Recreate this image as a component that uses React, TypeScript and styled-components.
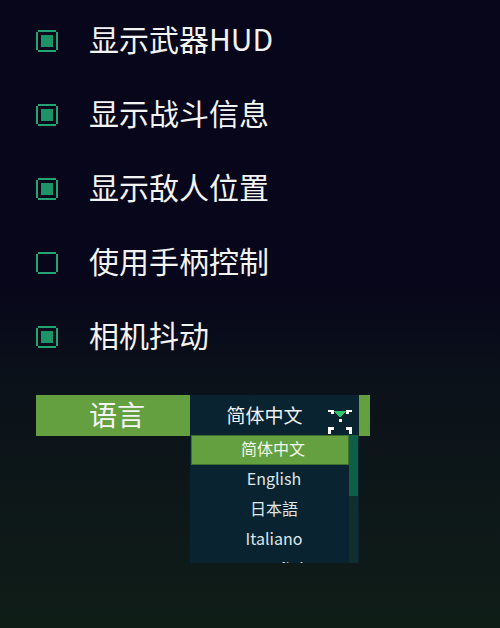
import React from "react";
import styled, { createGlobalStyle } from "styled-components";

const GlobalStyle = createGlobalStyle`
  html, body {
    margin: 0;
    padding: 0;
    width: 500px;
    height: 628px;
    overflow: hidden;
    background: linear-gradient(180deg, #07061a 0%, #07061a 45%, #0b1219 62%, #0f1d17 100%);
    font-family: "Noto Sans CJK SC", "Noto Sans", sans-serif;
  }
  #root { height: 628px; }
`;

const Page = styled.div`
  width: 500px;
  height: 628px;
  box-sizing: border-box;
  padding: 4px 0 0 36px;
  display: flex;
  flex-direction: column;
`;

const OptionRow = styled.div`
  height: 74px;
  display: flex;
  align-items: center;
  gap: 31px;
`;

const OptionLabel = styled.span`
  font-size: 30px;
  color: #f3f3f3;
  line-height: 1;
  padding-bottom: 6px;
`;

const BoxSvg = styled.svg`
  width: 22px;
  height: 22px;
  flex: none;
  shape-rendering: crispEdges;
`;

const Checkbox = ({ checked }: { checked: boolean }) => (
  <BoxSvg viewBox="0 0 22 22">
    <rect x="2" y="0" width="18" height="2" fill="#22a372" />
    <rect x="2" y="20" width="18" height="2" fill="#22a372" />
    <rect x="0" y="2" width="2" height="18" fill="#22a372" />
    <rect x="20" y="2" width="2" height="18" fill="#22a372" />
    {checked && <rect x="5" y="5" width="12" height="12" fill="#1c9467" />}
  </BoxSvg>
);

const LanguageRow = styled.div`
  margin-top: 21px;
  width: 334px;
  height: 41px;
  display: flex;
  background: #64a03f;
  position: relative;
`;

const LangLabel = styled.div`
  width: 154px;
  box-sizing: border-box;
  padding: 0 0 4px 8px;
  display: flex;
  align-items: center;
  justify-content: center;
  font-size: 28px;
  color: #f5f5f5;
`;

const Select = styled.div`
  width: 169px;
  box-sizing: border-box;
  padding: 0 20px 2px 0;
  background: #0a2331;
  display: flex;
  align-items: center;
  justify-content: center;
  font-size: 19px;
  color: #eef2f2;
  position: relative;
  overflow: hidden;
`;

const ArrowSvg = styled.svg`
  position: absolute;
  left: 138px;
  top: 15px;
  width: 24px;
  height: 24px;
  shape-rendering: crispEdges;
`;

const Dropdown = styled.div`
  position: absolute;
  left: 154px;
  top: 40px;
  width: 169px;
  height: 128px;
  background: #0a2331;
  overflow: hidden;
  z-index: 2;
`;

const ItemList = styled.div`
  width: 158px;
  margin-left: 1px;
  display: flex;
  flex-direction: column;
`;

const Item = styled.div<{ $active?: boolean }>`
  height: 30px;
  box-sizing: border-box;
  display: flex;
  align-items: center;
  justify-content: center;
  padding: 0 0 4px ${(p) => (p.$active ? "6px" : "8px")};
  font-size: 16px;
  color: ${(p) => (p.$active ? "#f2f6ee" : "#dfe7ea")};
  background: ${(p) => (p.$active ? "#64a03f" : "transparent")};
  border: 1px solid ${(p) => (p.$active ? "#3f6f30" : "transparent")};
`;

const ScrollTrack = styled.div`
  position: absolute;
  right: 1px;
  top: 0;
  width: 9px;
  height: 100%;
  background: #0f2e2c;
`;

const ScrollThumb = styled.div`
  width: 100%;
  height: 61px;
  background: #0f5f46;
`;

const options = [
  { label: "显示武器HUD", checked: true },
  { label: "显示战斗信息", checked: true },
  { label: "显示敌人位置", checked: true },
  { label: "使用手柄控制", checked: false },
  { label: "相机抖动", checked: true },
];

const languages = ["简体中文", "English", "日本語", "Italiano", "Español"];

export default function App() {
  return (
    <>
      <GlobalStyle />
      <Page>
        {options.map((o) => (
          <OptionRow key={o.label}>
            <Checkbox checked={o.checked} />
            <OptionLabel>{o.label}</OptionLabel>
          </OptionRow>
        ))}
        <LanguageRow>
          <LangLabel>语言</LangLabel>
          <Select>
            简体中文
            <ArrowSvg viewBox="0 0 24 24">
              <rect x="0" y="0" width="6" height="2" fill="#ffffff" />
              <rect x="3" y="2" width="3" height="2" fill="#ffffff" />
              <rect x="18" y="0" width="6" height="2" fill="#ffffff" />
              <rect x="18" y="2" width="3" height="2" fill="#ffffff" />
              <polygon points="6,1 18,1 12,8" fill="#2ec66f" />
              <rect x="11" y="9" width="3" height="3" fill="#ffffff" />
              <rect x="0" y="17" width="6" height="3" fill="#ffffff" />
              <rect x="0" y="20" width="3" height="4" fill="#ffffff" />
              <rect x="18" y="17" width="6" height="3" fill="#ffffff" />
              <rect x="21" y="20" width="3" height="4" fill="#ffffff" />
            </ArrowSvg>
          </Select>
          <Dropdown>
            <ItemList>
              {languages.map((l, i) => (
                <Item key={l} $active={i === 0}>
                  {l}
                </Item>
              ))}
            </ItemList>
            <ScrollTrack>
              <ScrollThumb />
            </ScrollTrack>
          </Dropdown>
        </LanguageRow>
      </Page>
    </>
  );
}
